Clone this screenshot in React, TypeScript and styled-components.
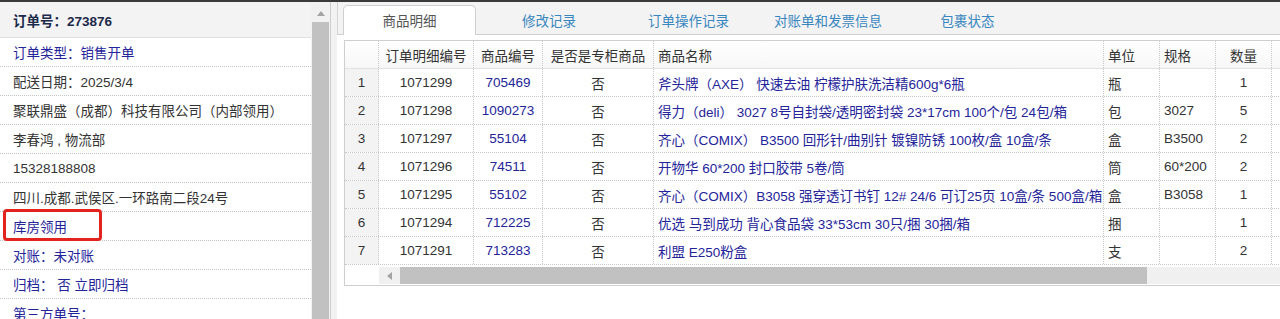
import React from 'react';
import styled, { createGlobalStyle } from 'styled-components';

const FONT = `"Liberation Sans", "Noto Sans CJK SC", sans-serif`;
const LINK = '#24249a';
const TEXT = '#333';

const GlobalStyle = createGlobalStyle`
  html, body {
    margin: 0;
    padding: 0;
    background: #fff;
  }
  body {
    font-family: ${FONT};
    font-size: 13.5px;
    color: ${TEXT};
    overflow: hidden;
  }
`;

const Page = styled.div`
  width: 1280px;
  height: 319px;
  display: flex;
  flex-direction: column;
  overflow: hidden;
`;

const TopBar = styled.div`
  height: 2px;
  flex-shrink: 0;
  background: #3a3a3a;
`;

const Body = styled.div`
  flex: 1;
  display: flex;
  min-height: 0;
`;

/* ---------- left info panel ---------- */

const Sidebar = styled.aside`
  width: 330px;
  flex-shrink: 0;
  display: flex;
  border-right: 1px solid #cfcfcf;
`;

const InfoList = styled.div`
  width: 311px;
  overflow: hidden;
`;

const InfoHeader = styled.div`
  height: 36px;
  box-sizing: border-box;
  padding-left: 13px;
  display: flex;
  align-items: center;
  background: #f3f3f3;
  border-bottom: 1px solid #e0e0e0;
  font-weight: bold;
  color: #1c2a4b;
`;

const InfoRow = styled.div<{ $link?: boolean }>`
  height: 29px;
  box-sizing: border-box;
  padding-left: 13px;
  display: flex;
  align-items: center;
  border-bottom: 1px dotted #c4c4c4;
  white-space: nowrap;
  color: ${p => (p.$link ? LINK : TEXT)};
`;

const Marked = styled.span`
  position: relative;

  &::after {
    content: '';
    position: absolute;
    left: -10px;
    top: -7px;
    width: 99px;
    height: 32px;
    box-sizing: border-box;
    border: 3px solid #e3231d;
    border-radius: 4px;
  }
`;

const VScroll = styled.div`
  width: 19px;
  display: flex;
  flex-direction: column;
  align-items: center;
  background: #f1f1f1;
  padding-top: 9px;
  box-sizing: border-box;
`;

const UpArrow = styled.div`
  width: 0;
  height: 0;
  border-left: 4px solid transparent;
  border-right: 4px solid transparent;
  border-bottom: 5px solid #a3a3a3;
`;

const VThumb = styled.div`
  margin-top: 6px;
  width: 17px;
  flex: 1;
  background: #c1c1c1;
`;

const Splitter = styled.div`
  width: 6px;
  flex-shrink: 0;
  background: #f2f2f2;
`;

/* ---------- right tabs + grid ---------- */

const Main = styled.section`
  flex: 1;
  min-width: 0;
  display: flex;
  flex-direction: column;
  overflow: hidden;
`;

const TabBar = styled.nav`
  height: 33px;
  flex-shrink: 0;
  box-sizing: border-box;
  display: flex;
  align-items: flex-end;
  padding-left: 5px;
  background: #f3f3f3;
  border-left: 1px solid #d6d6d6;
  border-bottom: 1px solid #cfcfcf;
`;

const Tab = styled.div<{ $active?: boolean }>`
  width: 133px;
  height: 30px;
  margin: 0 6.5px -1px 0;
  box-sizing: border-box;
  display: flex;
  align-items: center;
  justify-content: center;
  border-radius: 5px 5px 0 0;
  border: 1px solid ${p => (p.$active ? '#cfcfcf' : 'transparent')};
  border-bottom: none;
  background: ${p => (p.$active ? '#fff' : 'transparent')};
  color: ${p => (p.$active ? '#555' : '#3a87c0')};
  padding-bottom: 2px;
`;

const GridWrap = styled.div`
  margin: 5px 0 0 7px;
  width: 1000px;
  border: 1px solid #cfcfcf;
  background: #fff;
`;

const COLS = '34px 95px 69px 111px 450px 56px 56px 56px 73px';

const HeadRow = styled.div`
  display: grid;
  grid-template-columns: ${COLS};
  height: 28px;
  box-sizing: border-box;
  border-bottom: 1px solid #e2e2e2;
  background: linear-gradient(#fff, #f7f7f7);
`;

const Row = styled.div`
  display: grid;
  grid-template-columns: ${COLS};
  height: 28px;
  box-sizing: border-box;
  border-bottom: 1px dotted #c8c8c8;
`;

const Cell = styled.div<{ $align?: 'left' | 'center'; $link?: boolean; $index?: boolean }>`
  display: flex;
  align-items: center;
  justify-content: ${p => (p.$align === 'left' ? 'flex-start' : 'center')};
  padding: 0 ${p => (p.$align === 'left' ? '4px' : '0')};
  box-sizing: border-box;
  border-right: 1px dotted #c8c8c8;
  white-space: nowrap;
  overflow: hidden;
  color: ${p => (p.$link ? LINK : TEXT)};
  background: ${p => (p.$index ? '#f3f3f3' : 'transparent')};
`;

const HScroll = styled.div`
  display: flex;
  height: 17px;
  margin: 2px 0 1px 34px;
  background: #f0f0f0;
`;

const LeftArrowBox = styled.div`
  width: 21px;
  display: flex;
  align-items: center;
  justify-content: center;
`;

const LeftArrow = styled.div`
  width: 0;
  height: 0;
  border-top: 4px solid transparent;
  border-bottom: 4px solid transparent;
  border-right: 5px solid #a3a3a3;
`;

const HThumb = styled.div`
  width: 747px;
  background: #c1c1c1;
`;

type Item = { text: string; link?: boolean; marked?: boolean };

const info: Item[] = [
  { text: '订单类型：销售开单', link: true },
  { text: '配送日期：2025/3/4' },
  { text: '聚联鼎盛（成都）科技有限公司（内部领用）' },
  { text: '李春鸿 , 物流部' },
  { text: '15328188808' },
  { text: '四川.成都.武侯区.一环路南二段24号' },
  { text: '库房领用', link: true, marked: true },
  { text: '对账：未对账', link: true },
  { text: '归档： 否 立即归档', link: true },
  { text: '第三方单号：', link: true },
];

const tabs = ['商品明细', '修改记录', '订单操作记录', '对账单和发票信息', '包裹状态'];

type Line = { detail: string; code: string; name: string; unit: string; spec: string; qty: number };

const lines: Line[] = [
  { detail: '1071299', code: '705469', name: '斧头牌（AXE） 快速去油 柠檬护肤洗洁精600g*6瓶', unit: '瓶', spec: '', qty: 1 },
  { detail: '1071298', code: '1090273', name: '得力（deli） 3027 8号自封袋/透明密封袋 23*17cm 100个/包 24包/箱', unit: '包', spec: '3027', qty: 5 },
  { detail: '1071297', code: '55104', name: '齐心（COMIX） B3500 回形针/曲别针 镀镍防锈 100枚/盒 10盒/条', unit: '盒', spec: 'B3500', qty: 2 },
  { detail: '1071296', code: '74511', name: '开物华 60*200 封口胶带 5卷/筒', unit: '筒', spec: '60*200', qty: 2 },
  { detail: '1071295', code: '55102', name: '齐心（COMIX）B3058 强穿透订书钉 12# 24/6 可订25页 10盒/条 500盒/箱', unit: '盒', spec: 'B3058', qty: 1 },
  { detail: '1071294', code: '712225', name: '优选 马到成功 背心食品袋 33*53cm 30只/捆 30捆/箱', unit: '捆', spec: '', qty: 1 },
  { detail: '1071291', code: '713283', name: '利盟 E250粉盒', unit: '支', spec: '', qty: 2 },
];

export default function App() {
  return (
    <Page>
      <GlobalStyle />
      <TopBar />
      <Body>
        <Sidebar>
          <InfoList>
            <InfoHeader>订单号：273876</InfoHeader>
            {info.map(item => (
              <InfoRow key={item.text} $link={item.link}>
                {item.marked ? <Marked>{item.text}</Marked> : item.text}
              </InfoRow>
            ))}
          </InfoList>
          <VScroll>
            <UpArrow />
            <VThumb />
          </VScroll>
        </Sidebar>
        <Splitter />
        <Main>
          <TabBar>
            {tabs.map((t, i) => (
              <Tab key={t} $active={i === 0}>{t}</Tab>
            ))}
          </TabBar>
          <GridWrap>
            <HeadRow>
              <Cell />
              <Cell>订单明细编号</Cell>
              <Cell>商品编号</Cell>
              <Cell>是否是专柜商品</Cell>
              <Cell $align="left">商品名称</Cell>
              <Cell $align="left">单位</Cell>
              <Cell $align="left">规格</Cell>
              <Cell>数量</Cell>
              <Cell />
            </HeadRow>
            {lines.map((l, i) => (
              <Row key={l.detail}>
                <Cell $index>{i + 1}</Cell>
                <Cell>{l.detail}</Cell>
                <Cell $link>{l.code}</Cell>
                <Cell>否</Cell>
                <Cell $align="left" $link>{l.name}</Cell>
                <Cell $align="left">{l.unit}</Cell>
                <Cell $align="left">{l.spec}</Cell>
                <Cell>{l.qty}</Cell>
                <Cell />
              </Row>
            ))}
            <HScroll>
              <LeftArrowBox>
                <LeftArrow />
              </LeftArrowBox>
              <HThumb />
            </HScroll>
          </GridWrap>
        </Main>
      </Body>
    </Page>
  );
}
